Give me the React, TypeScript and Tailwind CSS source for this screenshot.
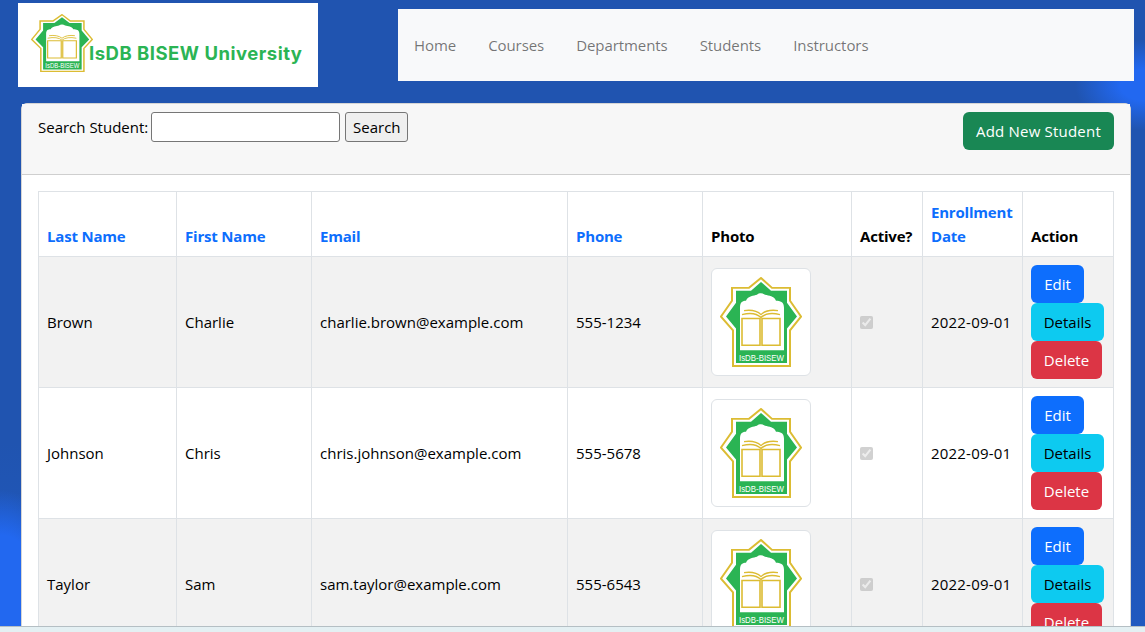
const rows = [
  { last: "Brown", first: "Charlie", email: "charlie.brown@example.com", phone: "555-1234" },
  { last: "Johnson", first: "Chris", email: "chris.johnson@example.com", phone: "555-5678" },
  { last: "Taylor", first: "Sam", email: "sam.taylor@example.com", phone: "555-6543" },
];

const Emblem = ({ className }: { className: string }) => (
  <svg viewBox="-1 -1 82 91" preserveAspectRatio="none" className={className}>
    {/* gold frame, then green star, then white dome */}
    <path d="M40 0 L51 10 H69 V23 L80 39 L69 53 V89 H12 V53 L0 39 L11 23 V10 H28 Z" fill="#fff" stroke="#dcbc33" strokeWidth="2" />
    <path d="M40 4 L50 13 H66 V25 L76 39 L66 51 V86 H15 V51 L5 39 L15 25 V13 H30 Z" fill="#2bb454" />
    <path d="M19 73 V30 C19 24 22 23 25 23 C27 18 33 18 36 17 C38 15 42 15 44 17 C48 18 53 18 55 23 C59 23 63 24 63 30 V73 Z" fill="#fff" />
    <path d="M21 41 H39 V68 H21 Z M41 41 H59 V68 H41 Z" fill="none" stroke="#dcbc33" strokeWidth="1.6" />
    <path d="M23 33 C30 32 36 33 40 37 C44 33 50 32 57 33 M21 37 C29 35 36 36 40 40 C44 36 51 35 59 37" fill="none" stroke="#dcbc33" strokeWidth="1.3" />
    <text x="40.5" y="83.5" textAnchor="middle" fontSize="10" textLength="45" lengthAdjust="spacingAndGlyphs" fill="#fff" fontFamily="'Liberation Sans', sans-serif">IsDB-BISEW</text>
  </svg>
);

const Th = ({ children, link }: { children: React.ReactNode; link?: boolean }) => (
  <th className={`border border-[#dee2e6] p-2 text-left align-bottom font-bold tracking-[-0.2px] ${link ? "text-[#0d6efd]" : "text-black"}`}>
    {children}
  </th>
);

const App = () => {
  return (
    <div className="flex h-screen flex-col overflow-hidden bg-[radial-gradient(ellipse_70px_45px_at_1145px_85px,#2268f0_35%,transparent_100%),radial-gradient(ellipse_70px_100px_at_0px_590px,#2268f0_55%,transparent_100%),linear-gradient(180deg,#2054b0_0%,#2054b0_70%,#2059c0_100%)] font-['Open_Sans',sans-serif] text-[15px] leading-[24px] text-[#212529]">
      <div className="min-h-0 flex-1 overflow-hidden">
        <header className="flex items-start pt-[3px] pl-[18px]">
          <div className="flex h-[84px] w-[300px] items-start bg-white pt-[11px] pl-[13px]">
            <Emblem className="h-[58px] w-[62px] shrink-0" />
            <span className="mt-[27px] -ml-[4px] font-['Inter',sans-serif] text-[18.5px] font-bold tracking-[0.5px] whitespace-nowrap text-[#2bb454]">IsDB BISEW University</span>
          </div>
          <nav className="mt-[6px] ml-[80px] flex h-[72px] w-[736px] items-center gap-[32px] bg-[#f8f9fa] pl-[16px] tracking-[-0.07px] text-[rgba(0,0,0,0.55)]">
            <span>Home</span>
            <span>Courses</span>
            <span>Departments</span>
            <span>Students</span>
            <span>Instructors</span>
          </nav>
        </header>
        <section className="mt-[16px] ml-[21px] w-[1110px] rounded-t-[6px] border border-[#d5d5d5] bg-white">
          <div className="flex h-[71px] items-start justify-between border-b border-[#cfcfcf] bg-[#f7f7f7] pt-[8px] pr-[16px] pl-[16px] text-black">
            <form className="flex items-center gap-[3px]">
              <label>Search Student:</label>
              <input className="h-[30px] w-[189px] rounded-[3px] border border-[#767676] bg-white" />
              <button type="button" className="ml-[2px] h-[30px] w-[63px] rounded-[3px] border border-[#767676] bg-[#efefef]">Search</button>
            </form>
            <button type="button" className="h-[38px] w-[151px] rounded-[6px] bg-[#198754] tracking-[0.2px] text-white">Add New Student</button>
          </div>
          <div className="pt-[16px] pl-[16px]">
            <table className="w-[1075px] table-fixed border-collapse text-black">
              <colgroup>
                <col className="w-[138px]" />
                <col className="w-[135px]" />
                <col className="w-[256px]" />
                <col className="w-[135px]" />
                <col className="w-[149px]" />
                <col className="w-[71px]" />
                <col className="w-[100px]" />
                <col className="w-[91px]" />
              </colgroup>
              <thead>
                <tr className="h-[65px]">
                  <Th link>Last Name</Th>
                  <Th link>First Name</Th>
                  <Th link>Email</Th>
                  <Th link>Phone</Th>
                  <Th>Photo</Th>
                  <Th>Active?</Th>
                  <Th link>Enrollment Date</Th>
                  <Th>Action</Th>
                </tr>
              </thead>
              <tbody>
                {rows.map((r, i) => (
                  <tr key={r.last} className={`h-[131px] ${i % 2 === 0 ? "bg-[#f2f2f2]" : "bg-white"}`}>
                    <td className="border border-[#dee2e6] p-2">{r.last}</td>
                    <td className="border border-[#dee2e6] p-2">{r.first}</td>
                    <td className="border border-[#dee2e6] p-2">{r.email}</td>
                    <td className="border border-[#dee2e6] p-2">{r.phone}</td>
                    <td className="border border-[#dee2e6] p-2">
                      <div className="flex h-[108px] w-[100px] items-center justify-center rounded-[6px] border border-[#dee2e6] bg-white">
                        <Emblem className="h-[90px] w-[82px]" />
                      </div>
                    </td>
                    <td className="border border-[#dee2e6] p-2">
                      <input type="checkbox" checked disabled readOnly className="block h-[13px] w-[13px]" />
                    </td>
                    <td className="border border-[#dee2e6] p-2 tracking-[0.2px] whitespace-nowrap">2022-09-01</td>
                    <td className="border border-[#dee2e6] p-2">
                      <div className="flex flex-col items-start">
                        <button type="button" className="h-[38px] w-[53px] rounded-[6px] bg-[#0d6efd] text-white">Edit</button>
                        <button type="button" className="h-[38px] w-[73px] rounded-[6px] bg-[#0dcaf0] text-black">Details</button>
                        <button type="button" className="h-[38px] w-[71px] rounded-[6px] bg-[#dc3545] text-white">Delete</button>
                      </div>
                    </td>
                  </tr>
                ))}
              </tbody>
            </table>
          </div>
        </section>
      </div>
      <div className="h-[6px] shrink-0 border-t border-[#b5bfc4] bg-[#e4f0f3]" />
    </div>
  );
};

export default App;
